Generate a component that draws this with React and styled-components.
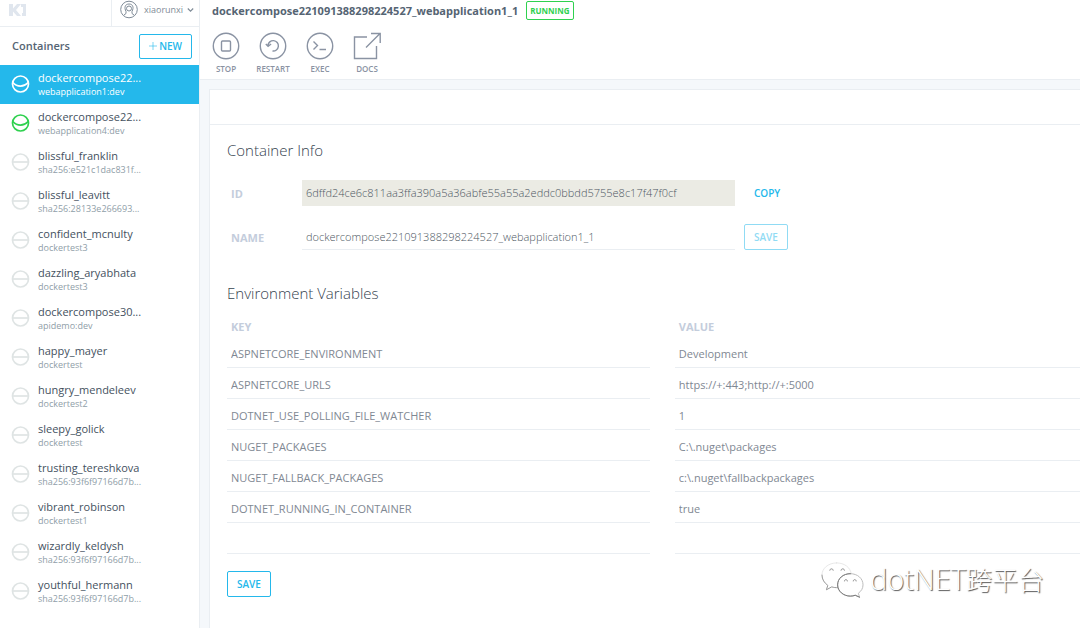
import React, { useState } from 'react';
import styled, { createGlobalStyle, css } from 'styled-components';

const colors = {
  brand: '#24b8eb',
  green: '#2fd14f',
  text: '#556473',
  muted: '#8f9ea8',
  label: '#c4cddc',
  line: '#eaeef2',
  canvas: '#f5f8fb',
};

const containers = [
  { name: 'dockercompose22...', image: 'webapplication1:dev', state: 'active' },
  { name: 'dockercompose22...', image: 'webapplication4:dev', state: 'running' },
  { name: 'blissful_franklin', image: 'sha256:e521c1dac831f...' },
  { name: 'blissful_leavitt', image: 'sha256:28133e266693...' },
  { name: 'confident_mcnulty', image: 'dockertest3' },
  { name: 'dazzling_aryabhata', image: 'dockertest3' },
  { name: 'dockercompose30...', image: 'apidemo:dev' },
  { name: 'happy_mayer', image: 'dockertest' },
  { name: 'hungry_mendeleev', image: 'dockertest2' },
  { name: 'sleepy_golick', image: 'dockertest' },
  { name: 'trusting_tereshkova', image: 'sha256:93f6f97166d7b...' },
  { name: 'vibrant_robinson', image: 'dockertest1' },
  { name: 'wizardly_keldysh', image: 'sha256:93f6f97166d7b...' },
  { name: 'youthful_hermann', image: 'sha256:93f6f97166d7b...' },
];

const initialEnv = [
  ['ASPNETCORE_ENVIRONMENT', 'Development'],
  ['ASPNETCORE_URLS', 'https://+:443;http://+:5000'],
  ['DOTNET_USE_POLLING_FILE_WATCHER', '1'],
  ['NUGET_PACKAGES', 'C:\\.nuget\\packages'],
  ['NUGET_FALLBACK_PACKAGES', 'c:\\.nuget\\fallbackpackages'],
  ['DOTNET_RUNNING_IN_CONTAINER', 'true'],
  ['', ''],
];

const GlobalStyle = createGlobalStyle`
  * {
    box-sizing: border-box;
  }

  body {
    margin: 0;
    background: #fff;
    color: ${colors.text};
    font-family: 'Open Sans', 'Noto Sans CJK SC', sans-serif;
    font-size: 12px;
  }

  button, input {
    font: inherit;
  }
`;

const Page = styled.div`
  position: relative;
  display: flex;
  min-height: 100vh;
  overflow: hidden;
`;

const Sidebar = styled.aside`
  flex: 0 0 200px;
  border-right: 1px solid ${colors.line};
`;

const TopBar = styled.div`
  display: flex;
  height: 27px;
  border-bottom: 1px solid ${colors.line};
`;

const Brand = styled.div`
  flex: 1;
  padding: 3px 8px;
`;

const Account = styled.button`
  display: flex;
  align-items: flex-start;
  width: 88px;
  padding: 0 0 0 8px;
  border: 0;
  border-left: 1px solid ${colors.line};
  background: none;
  color: #7f8b97;
  font-size: 9px;
  line-height: 20px;
  white-space: nowrap;

  span {
    margin: 0 4px 0 6px;
  }
`;

const ListHeader = styled.div`
  display: flex;
  align-items: center;
  justify-content: space-between;
  height: 38px;
  padding: 0 7px 0 12px;

  h2 {
    margin: 0 0 2px;
    font-size: 11px;
    font-weight: 600;
  }
`;

const OutlineButton = styled.button`
  height: ${(props) => (props.$small ? '25px' : '26px')};
  padding: 0 9px;
  border: 1px solid ${colors.brand};
  border-radius: 2px;
  background: none;
  color: ${colors.brand};
  font-size: 10px;
  font-weight: 600;
  white-space: nowrap;

  &:disabled {
    opacity: 0.5;
  }
`;

const List = styled.ul`
  margin: 0;
  padding: 0;
  list-style: none;
`;

const ItemLink = styled.a`
  display: flex;
  align-items: center;
  gap: 8px;
  height: 39px;
  padding: 0 11px 1px;
  color: #445160;
  text-decoration: none;

  ${(props) => props.$active && css`
    background: ${colors.brand};
    color: #fff;
  `}
`;

const ItemName = styled.div`
  font-size: 11px;
  line-height: 14px;
`;

const ItemImage = styled.div`
  color: ${(props) => (props.$active ? '#fff' : colors.muted)};
  font-size: 9px;
  line-height: 13px;
`;

const Main = styled.main`
  display: flex;
  flex: 1;
  flex-direction: column;
  min-width: 0;
  background: ${colors.canvas};
`;

const Header = styled.header`
  height: 80px;
  padding: 0 12px;
  border-bottom: 1px solid ${colors.line};
  background: #fff;
`;

const TitleRow = styled.div`
  display: flex;
  align-items: center;
  gap: 8px;
  height: 20px;

  h1 {
    margin: 0;
    font-size: 11px;
    font-weight: 700;
  }
`;

const Status = styled.span`
  padding: 0 3px;
  border: 1px solid ${colors.green};
  border-radius: 2px;
  color: ${colors.green};
  font-size: 8px;
  font-weight: 700;
  line-height: 17px;
`;

const Actions = styled.div`
  display: flex;
  gap: 7px;
  margin: 12px 0 0 -6px;
`;

const Action = styled.button`
  display: flex;
  flex-direction: column;
  align-items: center;
  width: 40px;
  padding: 0;
  border: 0;
  background: none;
  color: #8a93a3;
  font-size: 8px;
  font-weight: 600;
  line-height: 10px;

  svg {
    margin-bottom: 4px;
  }
`;

const Panel = styled.section`
  flex: 1;
  margin: 9px 0 0 9px;
  border: 1px solid ${colors.line};
  border-width: 1px 0 0 1px;
  background: #fff;
`;

const PanelTabs = styled.div`
  height: 35px;
  border-bottom: 1px solid ${colors.line};
`;

const PanelBody = styled.div`
  padding: 13px 0 0 17px;
`;

const SectionTitle = styled.h3`
  margin: 0;
  color: #36434f;
  font-size: 15px;
  font-weight: 300;
  line-height: 24px;
`;

const Field = styled.div`
  display: flex;
  align-items: center;
  height: 26px;
  margin-top: 18px;

  label {
    width: 75px;
    padding-left: 4px;
    color: ${colors.label};
    font-size: 11px;
    font-weight: 700;
  }
`;

const TextInput = styled.input`
  display: block;
  width: 100%;
  height: 26px;
  padding: 0 4px;
  border: 0;
  border-bottom: 1px solid ${colors.line};
  border-radius: 0;
  background: none;
  color: #4d5763;
  font-size: 11px;
  font-weight: 300;

  &:read-only {
    border-color: #ebebe4;
    background: #ebebe4;
  }
`;

const EnvInput = styled(TextInput)`
  padding-bottom: 2px;
  color: #7f8893;
  font-weight: 400;
`;

const FieldControl = styled.div`
  flex: 0 1 433px;
  margin-right: 9px;
`;

const CopyButton = styled(OutlineButton)`
  border-color: transparent;
`;

const EnvTable = styled.table`
  width: 100%;
  border-spacing: 0;
  table-layout: fixed;

  th {
    height: 22px;
    padding: 0 4px;
    color: ${colors.label};
    font-size: 11px;
    font-weight: 700;
    text-align: left;
  }

  th:first-child {
    width: 52.5%;
  }

  td {
    height: 31px;
    padding: 5px 0 0;
  }

  td:first-child {
    padding-right: 25px;
  }
`;

const EnvSection = styled.div`
  margin: 31px 0 17px;

  ${SectionTitle} {
    margin-bottom: 10px;
  }
`;

const Watermark = styled.div`
  position: absolute;
  right: 36px;
  bottom: 28px;
  display: flex;
  align-items: center;
  gap: 6px;
  color: #fff;
  font-size: 26px;
  font-weight: 300;
  line-height: 40px;
  text-shadow: 1px 1px 1px #555;
`;

const WatermarkLatin = styled.span`
  font-size: 29px;
`;

const KitematicLogo = () => (
  <svg width="20" height="14" viewBox="0 0 20 14" fill="#e0e6ee" aria-hidden="true">
    <path d="M1 1h4v4.500l4-4.500h4l-5 6 5 6h-4l-4-4.500v4.500h-4z" />
    <path d="M13 1h5v12h-4v-3h1v-6h-2z" />
  </svg>
);

const AccountIcon = () => (
  <svg width="18" height="19" viewBox="0 0 18 19" fill="none" stroke="#7f8b97" aria-hidden="true">
    <circle cx="9" cy="9.500" r="8.300" />
    <path d="M6 11.500c-2-4-1-7.500 3-7.500s5 3.500 3 7.500M6 11.500v2l-2 1.500M12 11.500v2l2 1.500" />
    <circle cx="9" cy="8.500" r="2.500" />
  </svg>
);

const ChevronIcon = () => (
  <svg width="7" height="20" viewBox="0 0 7 20" fill="none" stroke="#7f8b97" strokeWidth="1.200" aria-hidden="true">
    <path d="M.8 8.500l2.700 2.700 2.700-2.700" />
  </svg>
);

const PlusIcon = () => (
  <svg width="8" height="8" viewBox="0 0 8 8" stroke={colors.brand} strokeWidth="0.600" aria-hidden="true">
    <path d="M0 4h8M4 0v8" />
  </svg>
);

const StateIcon = ({ state }) => {
  const stroke = { active: '#fff', running: colors.green }[state] || '#dfe4e4';
  return (
    <svg width="19" height="19" viewBox="0 0 19 19" fill="none" stroke={stroke} strokeWidth="1.700" aria-hidden="true">
      <circle cx="9.500" cy="9" r="8" />
      <path d={state ? 'M1.800 7.500c4.500 4.800 10.900 4.800 15.400 0' : 'M1.500 9h16'} />
    </svg>
  );
};

const actions = [
  {
    label: 'STOP',
    icon: <><circle cx="14" cy="14" r="12.700" /><rect x="9.500" y="9" width="9" height="10" rx="1" /></>,
  },
  {
    label: 'RESTART',
    icon: <><circle cx="14" cy="14" r="12.700" /><path d="M9 13.500a5.200 5.200 0 1 1 4.500 5.500M6.800 12l2.300 2.300 3-2.300" /></>,
  },
  {
    label: 'EXEC',
    icon: <><circle cx="14" cy="14" r="12.700" /><path d="M7.500 9.500l4 4-4 4M13.500 17.500h6.500" /></>,
  },
  {
    label: 'DOCS',
    icon: <path d="M14 5H1.500v21.500h22V14M13 15.500L26.500 2M18 1.500h9.200v9.500" />,
  },
];

const WeChatIcon = () => (
  <svg width="43" height="38" viewBox="0 0 44 38" fill="#fff" strokeLinecap="round" aria-hidden="true">
    <path d="M16 1.500C7.500 1.500 1 7 1 14c0 4.500 2.500 8 6 10.500L5.500 29l5.500-3c2 .7 4 .9 6.500.8L31 13C30 6 24 1.500 16 1.500z" stroke="#ddd" strokeWidth="0.700" />
    <path d="M1 14c0 4.500 2.500 8 6 10.500L5.500 29l5.500-3c2 .7 4 .9 6.500.8" stroke="#999" />
    <path d="M30 12.500c-7.500 0-13 5-13 11.500S23 35.500 30 35.500c2 0 3.500-.3 5-.9l4.500 2-1.300-4c3-2.300 4.800-5 4.800-8.600C43 17.500 37.500 12.500 30 12.500z" stroke="#bbb" />
    <path d="M30 12.500c-7.500 0-13 5-13 11.500S23 35.500 30 35.500c2 0 3.500-.3 5-.9l4.500 2" fill="none" stroke="#777" />
    <path d="M9 9c0-2 3.500-2 3.500 0M20.500 9c0-2 3.500-2 3.500 0M24 20c0-2 3-2 3 0M33 20c0-2 3-2 3 0" fill="none" stroke="#888" />
  </svg>
);

const App = () => {
  const [name, setName] = useState('dockercompose221091388298224527_webapplication1_1');
  const [env, setEnv] = useState(initialEnv);

  const updateEnv = (row, col, value) => {
    setEnv(env.map((pair, i) => (i === row ? pair.map((v, j) => (j === col ? value : v)) : pair)));
  };

  return (
    <>
      <GlobalStyle />
      <Page>
        <Sidebar>
          <TopBar>
            <Brand><KitematicLogo /></Brand>
            <Account type="button">
              <AccountIcon />
              <span>xiaorunxi</span>
              <ChevronIcon />
            </Account>
          </TopBar>
          <ListHeader>
            <h2>Containers</h2>
            <OutlineButton type="button" $small><PlusIcon /> NEW</OutlineButton>
          </ListHeader>
          <List>
            {containers.map((item, i) => (
              <li key={i}>
                <ItemLink href="#" $active={item.state === 'active'}>
                  <StateIcon state={item.state} />
                  <div>
                    <ItemName>{item.name}</ItemName>
                    <ItemImage $active={item.state === 'active'}>{item.image}</ItemImage>
                  </div>
                </ItemLink>
              </li>
            ))}
          </List>
        </Sidebar>

        <Main>
          <Header>
            <TitleRow>
              <h1>dockercompose221091388298224527_webapplication1_1</h1>
              <Status>RUNNING</Status>
            </TitleRow>
            <Actions>
              {actions.map((action) => (
                <Action type="button" key={action.label}>
                  <svg width="28" height="28" viewBox="0 0 28 28" fill="none" stroke="currentColor" strokeWidth="1.400" aria-hidden="true">
                    {action.icon}
                  </svg>
                  {action.label}
                </Action>
              ))}
            </Actions>
          </Header>

          <Panel>
            <PanelTabs />
            <PanelBody>
              <SectionTitle>Container Info</SectionTitle>
              <Field>
                <label htmlFor="container-id">ID</label>
                <FieldControl>
                  <TextInput id="container-id" readOnly value="6dffd24ce6c811aa3ffa390a5a36abfe55a55a2eddc0bbdd5755e8c17f47f0cf" />
                </FieldControl>
                <CopyButton type="button">COPY</CopyButton>
              </Field>
              <Field>
                <label htmlFor="container-name">NAME</label>
                <FieldControl>
                  <TextInput id="container-name" value={name} onChange={(e) => setName(e.target.value)} />
                </FieldControl>
                <OutlineButton type="button" disabled>SAVE</OutlineButton>
              </Field>

              <EnvSection>
                <SectionTitle>Environment Variables</SectionTitle>
                <EnvTable>
                  <thead>
                    <tr>
                      <th>KEY</th>
                      <th>VALUE</th>
                    </tr>
                  </thead>
                  <tbody>
                    {env.map((pair, row) => (
                      <tr key={row}>
                        {pair.map((value, col) => (
                          <td key={col}>
                            <EnvInput
                              aria-label={col ? 'Value' : 'Key'}
                              value={value}
                              onChange={(e) => updateEnv(row, col, e.target.value)}
                            />
                          </td>
                        ))}
                      </tr>
                    ))}
                  </tbody>
                </EnvTable>
              </EnvSection>
              <OutlineButton type="button">SAVE</OutlineButton>
            </PanelBody>
          </Panel>
        </Main>

        <Watermark>
          <WeChatIcon />
          <span><WatermarkLatin>dotNET</WatermarkLatin>跨平台</span>
        </Watermark>
      </Page>
    </>
  );
};

export default App;
